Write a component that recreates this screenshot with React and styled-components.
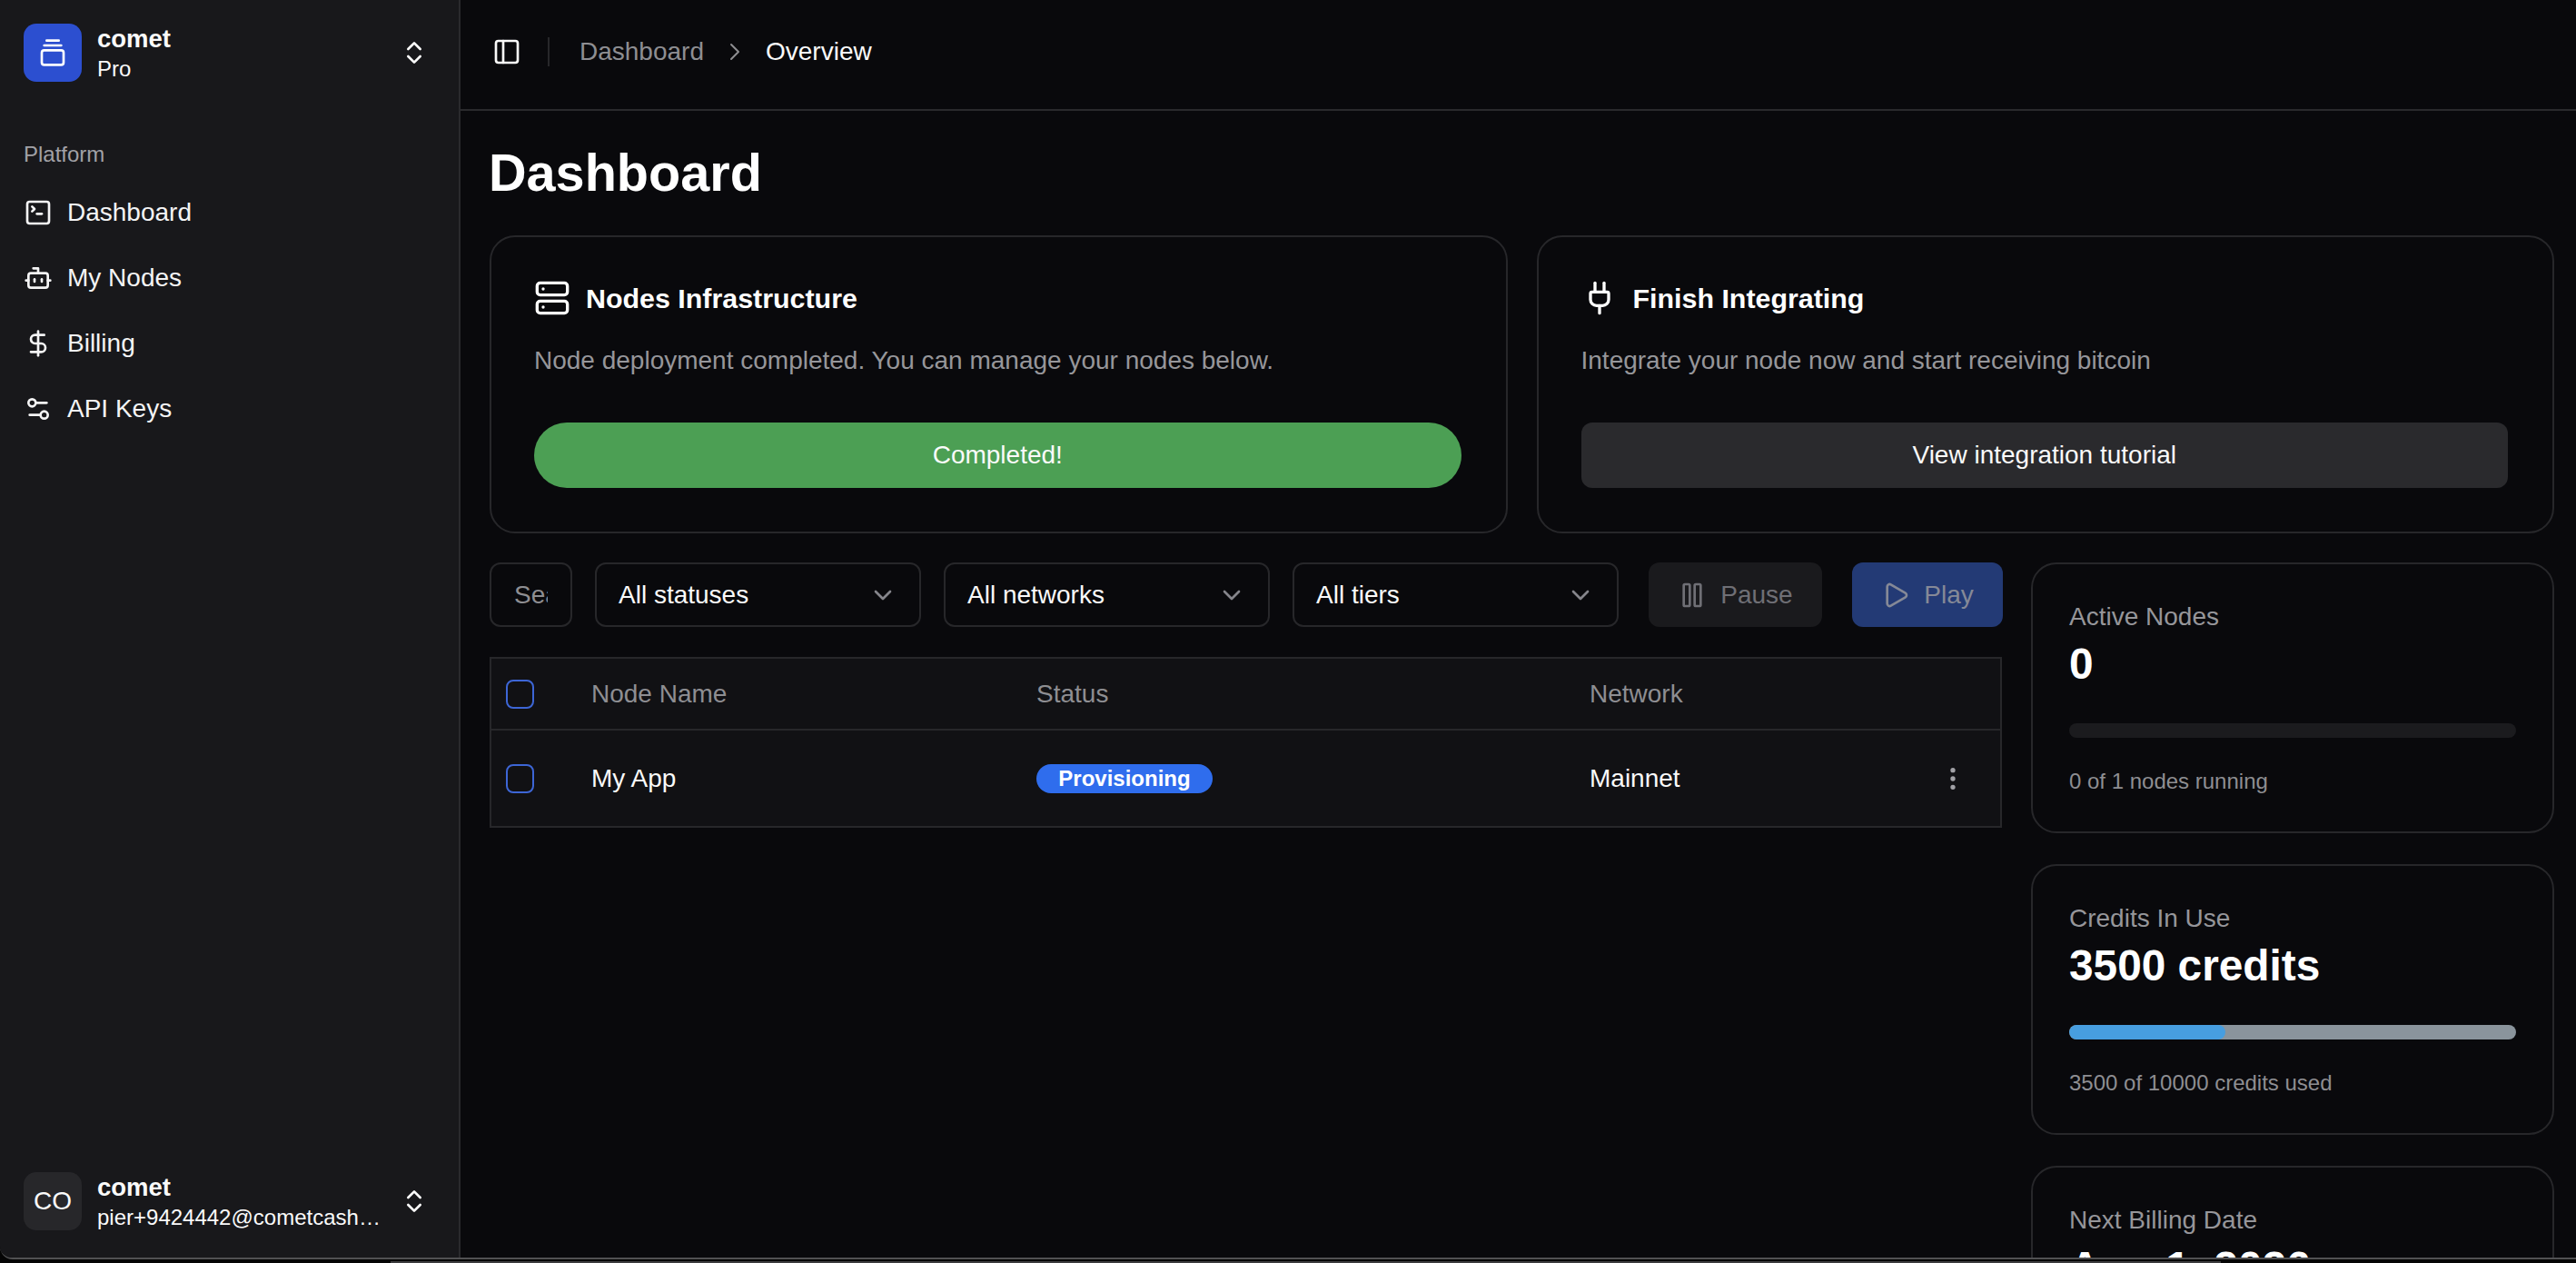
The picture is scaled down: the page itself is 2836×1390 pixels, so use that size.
import React from "react";
import styled, { createGlobalStyle } from "styled-components";
import {
  GalleryVerticalEnd, ChevronsUpDown, SquareTerminal, Bot, DollarSign, Settings2,
  PanelLeft, ChevronRight, Server, Plug, ChevronDown, Pause, Play, EllipsisVertical,
} from "lucide-react";

const Global = createGlobalStyle`
  html, body { margin: 0; padding: 0; background: #050505; }
  body { font-family: "Liberation Sans", Arial, sans-serif; color: #fafafa; overflow: hidden; }
  * { box-sizing: border-box; }
`;

const Desktop = styled.div`
  width: 2836px;
  height: 1390px;
  display: flex;
  flex-direction: column;
  background: #050505;
  overflow: hidden;
`;
const Frame = styled.div`
  height: 1386px;
  flex: none;
  display: flex;
  border-bottom: 2px solid #505052;
  border-bottom-left-radius: 14px;
  overflow: hidden;
  background: #09090c;
`;
const DockEdge = styled.div`
  height: 2px;
  width: 2015px;
  margin: 2px 0 0 430px;
  background: #3c3c3e;
`;
const Sidebar = styled.aside`
  width: 507px;
  flex: none;
  display: flex;
  flex-direction: column;
  background: #18181b;
  border-right: 2px solid #2a2a2d;
  padding: 26px 26px 30px;
`;
const Account = styled.div`
  display: flex;
  align-items: center;
  height: 64px;
  gap: 17px;
`;
const LogoTile = styled.div`
  width: 64px;
  height: 64px;
  flex: none;
  border-radius: 14px;
  background: #2c4fd0;
  display: flex;
  align-items: center;
  justify-content: center;
  color: #fff;
`;
const Avatar = styled(LogoTile)`
  background: #27272a;
  font-size: 28px;
  color: #fafafa;
`;
const AccountText = styled.div`
  flex: 1;
  min-width: 0;
  display: flex;
  flex-direction: column;
`;
const AccountName = styled.div`
  font-size: 27.5px;
  font-weight: 700;
  line-height: 35px;
`;
const AccountSub = styled.div`
  font-size: 24px;
  line-height: 32px;
  width: 312px;
  white-space: nowrap;
  overflow: hidden;
  text-overflow: ellipsis;
`;
const Updown = styled(ChevronsUpDown)`
  flex: none;
  margin: 0 7px 0 0;
  color: #fafafa;
`;
const GroupLabel = styled.div`
  margin-top: 62px;
  font-size: 24px;
  line-height: 36px;
  color: #a1a1a6;
`;
const Nav = styled.nav`
  display: flex;
  flex-direction: column;
  margin-top: 10px;
  flex: 1;
`;
const NavItem = styled.div`
  height: 72px;
  display: flex;
  align-items: center;
  gap: 16px;
  font-size: 28px;
  color: #f4f4f5;
`;
const Main = styled.main`
  flex: 1;
  min-width: 0;
  display: flex;
  flex-direction: column;
`;
const TopBar = styled.header`
  height: 122px;
  flex: none;
  display: flex;
  align-items: center;
  padding: 0 0 6px 35px;
  border-bottom: 2px solid #2a2a2d;
  font-size: 28px;
`;
const Divider = styled.div`
  width: 2px;
  height: 32px;
  background: #27272a;
  margin: 0 33px 0 29px;
`;
const Crumb = styled.span`
  color: ${(p) => (p.$current ? "#fafafa" : "#8e8e92")};
`;
const CrumbSep = styled(ChevronRight)`
  color: #8e8e92;
  margin: 0 18px;
`;
const Content = styled.div`
  flex: 1;
  min-height: 0;
  padding: 0 24px 0 32px;
`;
const Title = styled.h1`
  margin: 36px 0 0 -1px;
  font-size: 57.6px;
  line-height: 64px;
  font-weight: 700;
  color: #fff;
`;
const CtaRow = styled.div`
  display: grid;
  grid-template-columns: 1fr 1fr;
  gap: 32px;
  margin-top: 37px;
`;
const CtaCard = styled.section`
  height: 328px;
  border: 2px solid #27272a;
  border-radius: 28px;
  padding: 47px 49px 0 47px;
`;
const CtaHead = styled.div`
  display: flex;
  align-items: center;
  gap: 17px;
  height: 40px;
  font-size: 30.4px;
  font-weight: 700;
  color: #fff;
`;
const CtaText = styled.p`
  margin: 29px 0 0;
  font-size: 28px;
  line-height: 40px;
  color: #96969a;
`;
const CtaButton = styled.div`
  margin-top: 48px;
  height: 72px;
  display: flex;
  align-items: center;
  justify-content: center;
  font-size: 28px;
  color: #fafafa;
  background: ${(p) => (p.$done ? "#4c9f54" : "#2a2a2d")};
  border-radius: ${(p) => (p.$done ? "36px" : "12px")};
`;
const Columns = styled.div`
  display: flex;
  gap: 32px;
  margin-top: 32px;
  align-items: flex-start;
`;
const Left = styled.div`
  width: 1665px;
  flex: none;
`;
const Filters = styled.div`
  display: flex;
  height: 71px;
  gap: 25px;
`;
const Search = styled.input`
  width: 91px;
  flex: none;
  height: 100%;
  padding: 0 25px;
  background: transparent;
  border: 2px solid #27272a;
  border-radius: 12px;
  font: 28px "Liberation Sans", Arial, sans-serif;
  color: #fafafa;
  outline: none;
  &::placeholder { color: #8e8e92; opacity: 1; }
`;
const Select = styled.div`
  width: 359px;
  flex: none;
  display: flex;
  align-items: center;
  justify-content: space-between;
  padding: 0 24px;
  border: 2px solid #27272a;
  border-radius: 12px;
  font-size: 28px;
  color: #fafafa;
`;
const Caret = styled(ChevronDown)`
  color: #85858b;
`;
const ActionButton = styled.div`
  display: flex;
  align-items: center;
  justify-content: center;
  gap: 15px;
  flex: none;
  width: ${(p) => p.$w}px;
  margin-left: 8px;
  border-radius: 12px;
  font-size: 28px;
  color: ${(p) => (p.$primary ? "#858997" : "#6f6f75")};
  background: ${(p) => (p.$primary ? "#233a75" : "#1a1a1d")};
`;
const Table = styled.div`
  margin-top: 33px;
  border: 2px solid #27272a;
  background: #111114;
`;
const Row = styled.div`
  display: grid;
  grid-template-columns: 110px 490px 609px 1fr 106px;
  align-items: center;
  height: ${(p) => p.$h}px;
  font-size: 28px;
  color: ${(p) => (p.$head ? "#8e8e92" : "#fafafa")};
  border-bottom: ${(p) => (p.$head ? "2px solid #27272a" : "none")};
`;
const Check = styled.div`
  width: 31px;
  height: 32px;
  margin-left: 16px;
  border: 2px solid #3d66d6;
  border-radius: 8px;
`;
const Badge = styled.span`
  display: inline-flex;
  align-items: center;
  justify-content: center;
  width: 194px;
  height: 32px;
  border-radius: 16px;
  background: #2f6ded;
  color: #fff;
  font-size: 24px;
  font-weight: 700;
`;
const Dots = styled(EllipsisVertical)`
  color: #a1a1a6;
  justify-self: start;
  margin-left: 38px;
`;
const Stats = styled.div`
  flex: 1;
  min-width: 0;
  display: flex;
  flex-direction: column;
  gap: 34px;
`;
const StatCard = styled.section`
  height: 298px;
  flex: none;
  border: 2px solid #27272a;
  border-radius: 28px;
  padding: 38px 40px 0;
`;
const StatLabel = styled.div`
  font-size: 28px;
  line-height: 40px;
  color: #96969a;
`;
const StatValue = styled.div`
  margin-top: 4px;
  font-size: 47.8px;
  line-height: 56px;
  font-weight: 700;
  color: #fff;
  white-space: nowrap;
`;
const Track = styled.div`
  margin-top: 37px;
  height: 16px;
  border-radius: 8px;
  overflow: hidden;
  background: ${(p) => (p.$empty ? "#1b1b1e" : "#8a949c")};
`;
const Fill = styled.div`
  height: 100%;
  border-radius: 8px;
  background: #479ee0;
`;
const StatSub = styled.div`
  margin-top: 30px;
  font-size: 24px;
  line-height: 36px;
  color: #8e8e92;
`;

const navItems = [
  ["Dashboard", SquareTerminal],
  ["My Nodes", Bot],
  ["Billing", DollarSign],
  ["API Keys", Settings2],
];

export default function App() {
  return (
    <Desktop>
      <Global />
      <Frame>
        <Sidebar>
          <Account>
            <LogoTile><GalleryVerticalEnd size={32} /></LogoTile>
            <AccountText>
              <AccountName>comet</AccountName>
              <AccountSub>Pro</AccountSub>
            </AccountText>
            <Updown size={32} />
          </Account>
          <GroupLabel>Platform</GroupLabel>
          <Nav>
            {navItems.map(([label, Icon]) => (
              <NavItem key={label}><Icon size={32} />{label}</NavItem>
            ))}
          </Nav>
          <Account>
            <Avatar>CO</Avatar>
            <AccountText>
              <AccountName>comet</AccountName>
              <AccountSub>pier+9424442@cometcash.com</AccountSub>
            </AccountText>
            <Updown size={32} />
          </Account>
        </Sidebar>
        <Main>
          <TopBar>
            <PanelLeft size={32} />
            <Divider />
            <Crumb>Dashboard</Crumb>
            <CrumbSep size={32} strokeWidth={1.5} />
            <Crumb $current>Overview</Crumb>
          </TopBar>
          <Content>
            <Title>Dashboard</Title>
            <CtaRow>
              <CtaCard>
                <CtaHead><Server size={40} />Nodes Infrastructure</CtaHead>
                <CtaText>Node deployment completed. You can manage your nodes below.</CtaText>
                <CtaButton $done>Completed!</CtaButton>
              </CtaCard>
              <CtaCard>
                <CtaHead><Plug size={40} />Finish Integrating</CtaHead>
                <CtaText>Integrate your node now and start receiving bitcoin</CtaText>
                <CtaButton>View integration tutorial</CtaButton>
              </CtaCard>
            </CtaRow>
            <Columns>
              <Left>
                <Filters>
                  <Search placeholder="Search nodes" />
                  <Select>All statuses<Caret size={32} /></Select>
                  <Select>All networks<Caret size={32} /></Select>
                  <Select>All tiers<Caret size={32} /></Select>
                  <ActionButton $w={191}><Pause size={32} />Pause</ActionButton>
                  <ActionButton $w={166} $primary><Play size={32} />Play</ActionButton>
                </Filters>
                <Table>
                  <Row $head $h={79}>
                    <Check />
                    <span>Node Name</span>
                    <span>Status</span>
                    <span>Network</span>
                    <span />
                  </Row>
                  <Row $h={105}>
                    <Check />
                    <span>My App</span>
                    <span><Badge>Provisioning</Badge></span>
                    <span>Mainnet</span>
                    <Dots size={32} />
                  </Row>
                </Table>
              </Left>
              <Stats>
                <StatCard>
                  <StatLabel>Active Nodes</StatLabel>
                  <StatValue>0</StatValue>
                  <Track $empty />
                  <StatSub>0 of 1 nodes running</StatSub>
                </StatCard>
                <StatCard>
                  <StatLabel>Credits In Use</StatLabel>
                  <StatValue>3500 credits</StatValue>
                  <Track><Fill style={{ width: `${(3500 / 10000) * 100}%` }} /></Track>
                  <StatSub>3500 of 10000 credits used</StatSub>
                </StatCard>
                <StatCard>
                  <StatLabel>Next Billing Date</StatLabel>
                  <StatValue>Aug 1, 2026</StatValue>
                </StatCard>
              </Stats>
            </Columns>
          </Content>
        </Main>
      </Frame>
      <DockEdge />
    </Desktop>
  );
}
